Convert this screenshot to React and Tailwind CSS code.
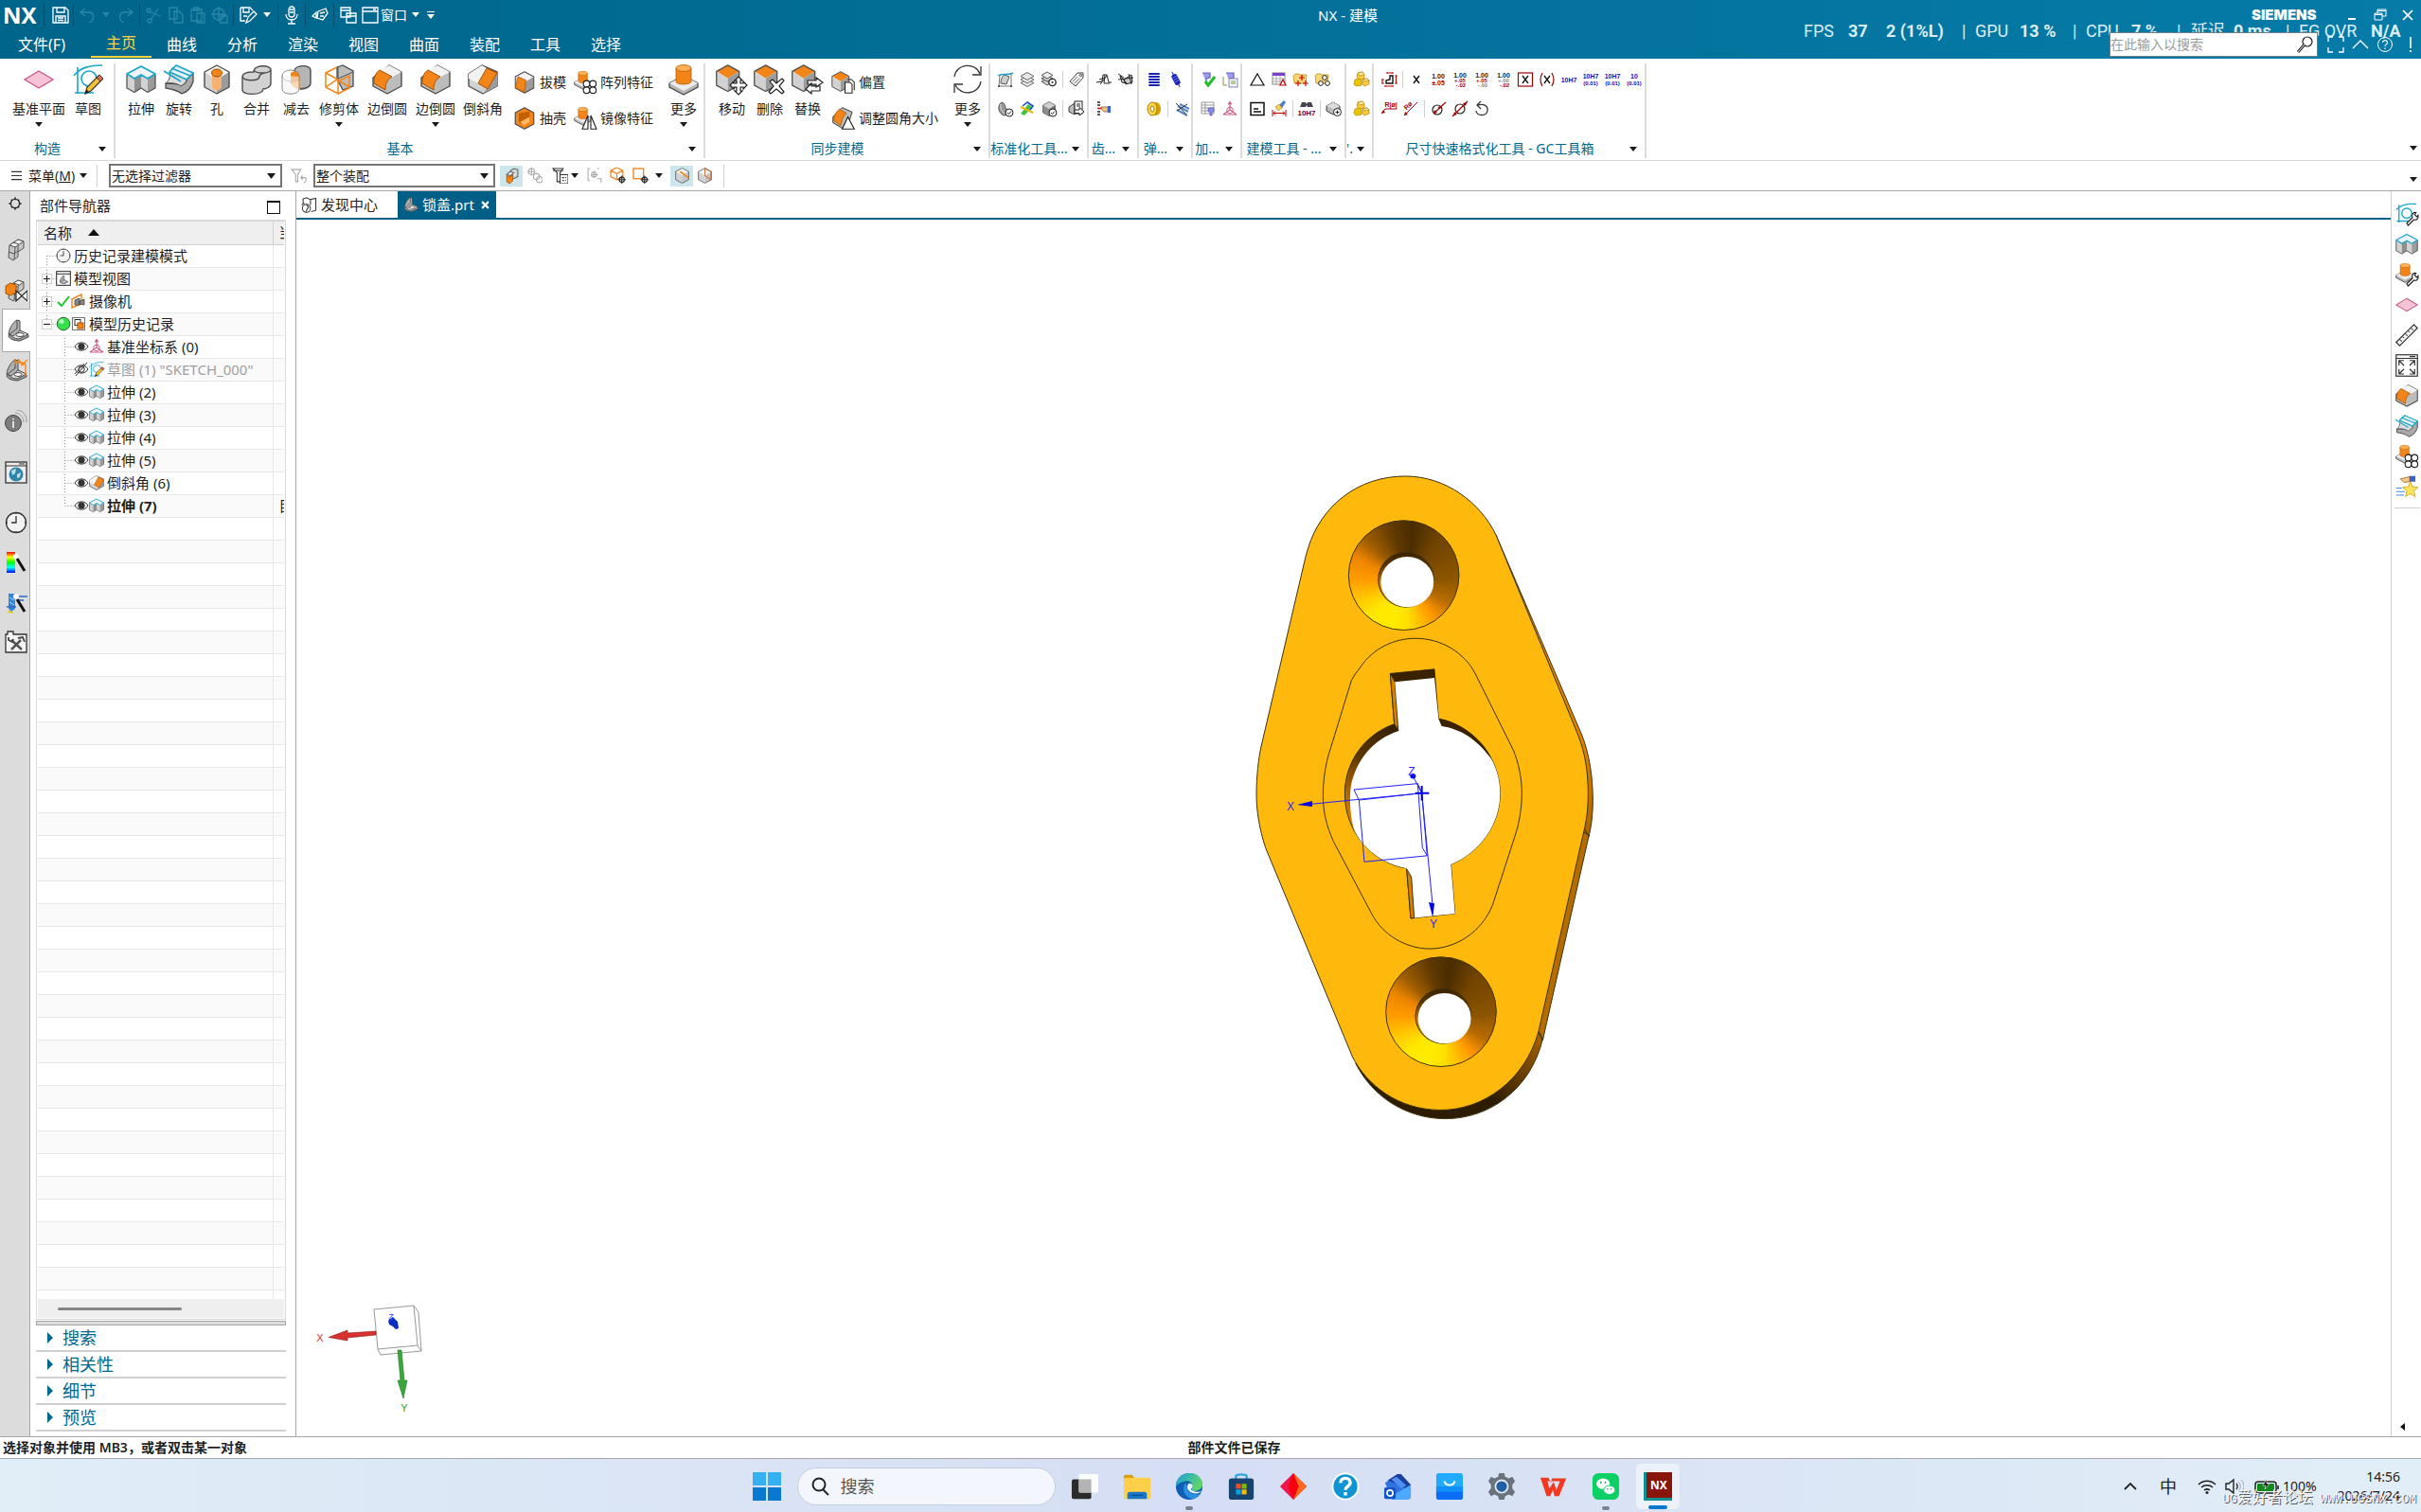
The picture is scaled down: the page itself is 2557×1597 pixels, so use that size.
import React from "react";

const S = ({ v = 24, w = 20, children, className = "" }) => (
  <svg viewBox={`0 0 ${v} ${v}`} width={w} height={w} className={`shrink-0 ${className}`} fill="none" aria-hidden="true">
    {children}
  </svg>
);

const Down = ({ className = "fill-[#1a1a1a]" }) => (
  <svg viewBox="0 0 8 5" width="8" height="5" className={`shrink-0 ${className}`} aria-hidden="true">
    <path d="M0 0H8L4 5Z" />
  </svg>
);

/* ---------- solid-body icons, 32 grid ---------- */
const OR = "#f28418";
const G1 = "#f2f2f2";
const G2 = "#d2d2d2";
const G3 = "#9c9c9c";
const ED = "#4d4d4d";

const Cube = ({ top = G1, left = G2, right = G3, x = 0, y = 0, k = 1 }) => (
  <g transform={`translate(${x} ${y}) scale(${k})`} strokeLinejoin="round">
    <path d="M16 1L29 8L16 16L3 8Z" fill={top} />
    <path d="M3 8L16 16V31L3 24Z" fill={left} />
    <path d="M29 8L16 16V31L29 24Z" fill={right} />
    <path d="M16 1L29 8V24L16 31L3 24V8Z" stroke={ED} strokeWidth="1.4" />
  </g>
);
const Boss = ({ x = 0, y = 0, k = 1 }) => (
  <g transform={`translate(${x} ${y}) scale(${k})`}>
    <path d="M16 12L31 20V24L16 32L1 24V20Z" fill="#b5b5b5" stroke={ED} strokeWidth="1.3" />
    <path d="M1 20L16 28L31 20L16 12Z" fill="#ececec" />
    <path d="M8 4V18C8 22 24 22 24 18V4Z" fill={OR} stroke="#b85c00" strokeWidth=".8" />
    <ellipse cx="16" cy="4" rx="8" ry="3.4" fill="#ffb054" stroke="#b85c00" strokeWidth=".8" />
  </g>
);

const shapes = {
  plane: <path d="M16 7L31 16L16 25L1 16Z" fill="#f6c3d6" stroke="#cc5b87" strokeWidth="1.4" />,
  sketch: (
    <g>
      <path d="M2 30H22M5 3V31M1 12C8 3 18 1 31 1" stroke="#1ba6cc" strokeWidth="1.6" />
      <circle cx="17" cy="15" r="8" stroke="#1ba6cc" strokeWidth="1.6" />
      <path d="M13 31L15 24L27 12L31 16L19 28Z" fill="#f1c232" stroke="#333" strokeWidth="1.2" />
      <path d="M25 14L28 11L32 15L29 18Z" fill="#e06a4a" stroke="#333" strokeWidth="1" />
      <path d="M13 31L14.5 26.5L17.5 29.5Z" fill="#222" />
    </g>
  ),
  extrude: (
    <g strokeLinejoin="round">
      <path d="M1 10L9 15V29L1 25Z" fill={G2} />
      <path d="M9 15L16 11V25L9 29Z" fill="#8f8f8f" />
      <path d="M16 11L23 15V29L16 25Z" fill={G2} />
      <path d="M31 10L23 15V29L31 25Z" fill={G3} />
      <path d="M16 2L31 10L23 15L16 11L9 15L1 10Z" fill="#eef4f6" stroke="#1ba6cc" strokeWidth="1.8" />
      <path d="M1 11V25L9 29.500L16 25L23 29.500L31 25V11" stroke={ED} strokeWidth="1.2" />
    </g>
  ),
  revolve: (
    <g strokeLinejoin="round">
      <path d="M31 9V18C29 25 25 29 19 31C14 27 8 26 2 25V20C9 20 14 20 18 22C21 21 24 19 24 16Z" fill="#a9a9a9" stroke={ED} strokeWidth="1.3" />
      <path d="M6 8L24 16C24 19 21 21 18 23C14 20 8 19 2 20C6 17 7 13 6 8Z" fill="#dedede" stroke={ED} />
      <path d="M13 1L31 9L24 16L6 8Z" fill="#e9f1f4" stroke="#1ba6cc" strokeWidth="1.7" />
      <path d="M0 7L18 18M8 4L28 12" stroke="#1ba6cc" strokeWidth="1.6" />
    </g>
  ),
  hole: (
    <g>
      <Cube />
      <path d="M11 8V25L16 28L21 25V8Z" fill="#f6b273" />
      <ellipse cx="16" cy="9" rx="5.5" ry="4" fill={OR} stroke="#9c5000" />
    </g>
  ),
  unite: (
    <g stroke={ED} strokeWidth="1.4">
      <path d="M13 8C13 0 31 0 31 6V20C31 24 26 26 23 26C22 33 1 33 1 27V13C1 9 8 8 13 8Z" fill={G2} />
      <path d="M13 6C15 10 29 10 31 6M1 13C3 18 18 18 19 13C19 11 22 9.500 25 9" />
    </g>
  ),
  subtract: (
    <g>
      <path d="M14 7C14 0 31 0 31 6V20C31 24 25 26 20 26Z" fill="#b5b5b5" stroke={ED} strokeWidth="1.4" />
      <path d="M14 7C19 8 20 12 20 18C16 21 14 20 10 20V9Z" fill={OR} />
      <path d="M20 17V26C18 27 12 24 10 20Z" fill="#ffb054" />
      <ellipse cx="10" cy="12" rx="9" ry="6" stroke="#8b8b8b" />
      <path d="M1 12V26C1 33 19 33 19 26V13" stroke="#8b8b8b" fill="#f3f3f3" fillOpacity=".6" />
    </g>
  ),
  trim: (
    <g>
      <path d="M14 3L20 1L31 7V23L20 27L14 15Z" fill="#bdbdbd" stroke={ED} strokeWidth="1.3" />
      <path d="M15 15L31 8M15 2V16" stroke={ED} />
      <path d="M2 9L15 16V31L2 24ZM2 9L14 3M15 31L27 25V12L15 18M2 24L14 16L27 24" stroke={OR} strokeWidth="1.5" />
    </g>
  ),
  blend: (
    <g strokeLinejoin="round">
      <path d="M18 1L31 8V23L16 31L1 23V14Z" fill="#bcbcbc" stroke={ED} strokeWidth="1.4" />
      <path d="M18 1L31 8L20 14L8 6Z" fill={G1} />
      <path d="M8 6C3 9 2 15 2 20L14 27C14 20 16 16 21 13Z" fill={OR} stroke="#a85400" />
    </g>
  ),
  chamfer: (
    <g strokeLinejoin="round">
      <path d="M15 1L31 8V23L16 31L1 23V10Z" fill={G2} stroke={ED} strokeWidth="1.4" />
      <path d="M15 1L20 4L11 20L1 15V10Z" fill={G1} />
      <path d="M31 9V23L16 31L20 26Z" fill={G3} />
      <path d="M20 4L31 9L21 26L11 20Z" fill={OR} stroke="#a85400" />
    </g>
  ),
  draft: (
    <g strokeLinejoin="round">
      <Cube />
      <path d="M7 8L18 13L16 30L3 23Z" fill={OR} stroke="#a85400" />
    </g>
  ),
  shell: (
    <g strokeLinejoin="round">
      <path d="M16 1L29 8V24L16 31L3 24V8Z" fill={OR} stroke={ED} strokeWidth="1.6" />
      <path d="M8 9L23 6V18L14 25L8 21Z" fill="#c25f00" />
      <path d="M10 21L23 14V21L15 26Z" fill="#ffb763" />
    </g>
  ),
  pattern: (
    <g>
      <Boss x={0} y={0} k={0.8} />
      <g fill="#fff" stroke="#222" strokeWidth="1.5">
        <circle cx="18" cy="18" r="4.500" /><circle cx="27" cy="18" r="4.500" />
        <circle cx="18" cy="27" r="4.500" /><circle cx="27" cy="27" r="4.500" />
      </g>
    </g>
  ),
  mirror: (
    <g>
      <Boss x={0} y={0} k={0.8} />
      <path d="M20 12V31H12ZM24 12V31H32Z" fill="#fff" stroke="#222" strokeWidth="1.5" />
    </g>
  ),
  boss: <Boss />,
  move: (
    <g>
      <Cube top={OR} x={-3} y={0} k={0.92} />
      <path d="M23 13L27 17H25V20H28V18L32 22L28 26V24H25V28H27L23 32L19 28H21V24H18V26L14 22L18 18V20H21V17H19Z" fill="#fff" stroke="#222" strokeWidth="1.2" />
    </g>
  ),
  del: (
    <g>
      <Cube top={OR} x={-3} y={0} k={0.92} />
      <path d="M16 18L19 16L23 20L29 15L31 17L26 23L31 29L29 31L23 26L17 31L15 29L20 23Z" fill="#fff" stroke="#222" strokeWidth="1.2" />
    </g>
  ),
  replace: (
    <g>
      <Cube top={OR} x={-3} y={0} k={0.92} />
      <path d="M16 17H25V14L32 19L25 24V21H16ZM29 23H20V20L14 26L20 31V28H29Z" fill="#fff" stroke="#222" strokeWidth="1.2" />
    </g>
  ),
  offset: (
    <g>
      <Cube top={OR} x={-3} y={0} k={0.92} />
      <path d="M18 16H25L28 19V31H18Z" fill="#fff" stroke="#222" strokeWidth="1.4" />
      <path d="M22 12H27L31 16V27" stroke="#222" strokeWidth="1.4" />
    </g>
  ),
  resize: (
    <g>
      <path d="M14 1L28 7L22 26L14 30L1 22V14Z" fill="#bcbcbc" stroke={ED} strokeWidth="1.4" />
      <path d="M10 3C4 8 2 14 2 19L12 26C13 18 16 12 20 9Z" fill={OR} stroke="#a85400" />
      <path d="M22 14L31 31H14Z" fill="#fff" stroke="#222" strokeWidth="1.5" />
    </g>
  ),
  refresh: (
    <g stroke="#333" strokeWidth="1.3">
      <path d="M2 13C4 -1 24 -3 29 10M30 18C28 32 9 34 3 22" />
      <path d="M30 2V11H21M2 30V21H11" />
    </g>
  ),
};
const Ico = ({ n, w = 32 }) => <S v={32} w={w} className="overflow-visible">{shapes[n]}</S>;

/* ---------- 16-grid small icons ---------- */
const grayCube = <g transform="scale(.5)"><Cube /></g>;
const T = ({ x, y, s, c, b, children }) => (
  <text x={x} y={y} fontSize={s} fill={c} fontWeight={b ? 700 : 400} textAnchor="middle" fontFamily="Liberation Sans, sans-serif">{children}</text>
);
const folder = <path d="M0 4L2 2H6L7 3H14L13 12H1Z" fill="#f7d774" stroke="#b98f1c" strokeWidth=".8" />;
const gauge = <path d="M4 1H12V6L8 7V11" fill="#9c9cec" stroke="#6262c4" strokeWidth="1.2" />;
const gold = (
  <g stroke="#b98200" strokeWidth=".7" fill="#ffcb3d">
    <path d="M4 1L9 0L11 3V7L5 8L3 5Z" /><path d="M9 8L14 7L16 9V13L11 15L9 13Z" /><path d="M1 8L6 7L8 9V14L2 15L0 13Z" fill="#e9c700" />
    <path d="M4 1L9 0L11 3L6 4ZM9 8L14 7L16 9L11 10Z" fill="#fff0b0" />
  </g>
);
const okBadge = <g><circle cx="12" cy="12" r="4" fill="#fff" stroke="#222" /><path d="M10 12L11.500 13.500L14 10.500" stroke="#222" /></g>;
const tiny = {
  xf: <g><path d="M2 3L14 2L14 15H1Z" stroke="#777" /><path d="M7 3L12 5L9 13L3 12C3 8 4 5 7 3Z" fill="#ccc" stroke="#555" /><path d="M0 4C5 0 9 5 16 1" stroke="#1ba6cc" strokeWidth="1.5" /><path d="M0 14H2V16H0ZM13 14H15V16H13Z" fill="#555" /></g>,
  layers: <g fill="#e8e8e8" stroke="#666"><path d="M8 7.500L15 11.500L8 15.500L1 11.500Z" /><path d="M8 4L15 8L8 12L1 8Z" /><path d="M8 .5L15 4.500L8 8.500L1 4.500Z" /></g>,
  layers2: <g><g fill="#ccc" stroke="#555"><path d="M6 7L12 10L6 14L0 10Z" /><path d="M6 4L12 7L6 10L0 7Z" /><path d="M6 0L12 3.500L6 7L0 3.500Z" fill="#eee" /></g><circle cx="11.500" cy="11" r="3.700" fill="#fff" stroke="#222" strokeWidth="1.300" /><circle cx="11.500" cy="11" r="1" fill="#222" /></g>,
  tag: <g><path d="M1 10L9 1L15 1L15 6L7 15Z" fill="#eee" stroke="#444" /><circle cx="12.500" cy="3.500" r="1.200" stroke="#444" /><path d="M4 10L9 5M6 12L11 7" stroke="#777" /></g>,
  gear1: <path d="M0 11L6 10L7 3H11L13 11H16M3 8L9 6M9 3L8 12L14 12M4 13L11 4" stroke="#222" />,
  gear2: <path d="M0 2L6 6M2 4L9 12L4 11ZM6 8L14 3L15 11L8 13ZM11 2L14 13M0 8L16 6" fill="#ccc" stroke="#222" />,
  spring: <path d="M3 2H13M3 5H13M3 8H13M3 11H13M3 14H13" stroke="#1a25b8" strokeWidth="2" strokeLinecap="round" />,
  spring2: <g transform="rotate(-28 8 8)"><rect x="5" y="2" width="6" height="12" rx="2" fill="#1a25b8" /><path d="M5 5H11M5 7.500H11M5 10H11" stroke="#7b84e8" strokeWidth=".7" /><path d="M8 -1V3M8 13V17" stroke="#1a25b8" /></g>,
  gaugeOk: <g><g transform="translate(-2 0)">{gauge}</g><path d="M5 10L8 14L15 5" stroke="#1fbf2a" strokeWidth="3" /></g>,
  gaugeDoc: <g>{gauge}<rect x="7" y="7" width="9" height="9" fill="#f4f4ff" stroke="#8484b4" /><path d="M9 10H14M9 12H14M1 5V14H5" stroke="#7c9a3c" /></g>,
  tri: <path d="M8 2L15 14H1Z" stroke="#111" strokeWidth="1.200" />,
  tableTri: <g><rect x="1" y="1" width="13" height="12" fill="#fff" stroke="#888" /><path d="M1 1H14V4H1Z" fill="#7a40c8" /><path d="M1 7H14M1 10H14M5 4V13M9 4V13" stroke="#999" strokeWidth=".8" /><path d="M12 8L15 14H9Z" fill="#fff" stroke="#c00000" strokeWidth="1.200" /></g>,
  folderPlus: <g>{folder}<path d="M9 3V9M6 6H12M5 9V15M2 12H8M13 9V15M10 12H16" stroke="#d40000" strokeWidth="1.200" /></g>,
  folderGear: <g>{folder}<g fill="#fff" stroke="#222"><circle cx="10" cy="6" r="2.400" /><circle cx="6" cy="12" r="2.400" /><circle cx="13" cy="12" r="2.400" /></g></g>,
  gold,
  partOk: <g><path d="M4 1C7 2 8 5 8 8L14 9V13L6 15C0 12 -1 4 4 1Z" fill="#999" stroke="#555" /><path d="M3 3C2 7 4 11 7 13" stroke="#ddd" />{okBadge}</g>,
  paint: <g><path d="M1 13L9 3L13 6L5 15Z" fill="#3fc43f" /><path d="M1 6L14 12" stroke="#e4b90c" strokeWidth="2" /><path d="M3 5L8 1L14 5L11 9" stroke="#1a4ad8" strokeWidth="1.600" /></g>,
  cubeOk: <g><g transform="scale(.5)"><Cube top="#d0d0d0" left="#8c8c8c" right="#707070" /></g>{okBadge}</g>,
  export: <g><path d="M0 6L6 2V14L0 11Z" fill="#bbb" stroke="#444" /><rect x="6" y="0" width="8" height="13" fill="#fff" stroke="#222" /><path d="M8 3H12M8 5H12" stroke="#222" /><path d="M6 9H11V6.500L16 11L11 15V12.500H6Z" fill="#fff" stroke="#222" /></g>,
  hand: <g><path d="M1 1H4M1 4H4M1 11H4M1 14H4" stroke="#222" strokeWidth="1.300" /><path d="M1 7.500H5" stroke="#d00" strokeWidth="1.500" /><path d="M5 6H12V11H8L6 9Z" fill="#f3c98c" stroke="#8b5a1c" strokeWidth=".8" /><path d="M12 5H15V12H12Z" fill="#3b62c8" /></g>,
  coil: <g><ellipse cx="10" cy="8" rx="5" ry="7" fill="#d79f00" /><ellipse cx="6" cy="8" rx="5" ry="7" fill="#ffd94a" stroke="#a67900" /><ellipse cx="6" cy="8" rx="2" ry="3" fill="#fff" stroke="#a67900" /></g>,
  cut: <g><path d="M4 5L15 11M3 9L14 15M6 3L16 8" stroke="#5b86c8" strokeWidth="2" /><path d="M2 2L13 14M14 3L3 10" stroke="#333" /></g>,
  sheet: <g><path d="M1 1H14V13H1ZM1 4H14M1 7H14M1 10H14M5 1V13" stroke="#999" /><path d="M8 7H14V11H12V15H10V11H8Z" fill="#8a8ae8" stroke="#5454c4" strokeWidth=".7" /></g>,
  csys: <g stroke="#cc5b87"><path d="M8 2V9L1 14M8 9L15 14M1 14H15" strokeWidth="1.200" /><path d="M8 0L10 3H6Z" fill="#cc5b87" strokeWidth=".6" /><circle cx="8" cy="9.500" r="3.300" /></g>,
  note: <g><rect x="1" y="1.500" width="14" height="13" stroke="#111" strokeWidth="1.500" /><path d="M4 8H9M4 11H12" stroke="#111" strokeWidth="1.300" /></g>,
  broom: <g><path d="M8 4L13 -1L15 1L11 7Z" fill="#4d78c4" /><path d="M4 6L8 3L11 7L7 10Z" fill="#f3cf5b" stroke="#a67900" strokeWidth=".6" /><path d="M1 9V16M15 9V16M2 12.500H14M4 10.500L2 12.500L4 14.500M12 10.500L14 12.500L12 14.500" stroke="#c00000" /></g>,
  bino: <g><path d="M3 1H7L8 3L9 1H13L15 6H9L8 4L7 6H1Z" fill="#445" /><T x={8} y={15} s={8} c="#700" b>10H7</T></g>,
  cubePlus: <g><path d="M7 1L14 5V10L7 14L0 10V5Z" fill="#bbb" stroke="#444" /><path d="M7 1L14 5L7 8L0 5Z" fill="#ddd" /><circle cx="11.500" cy="11.500" r="4" fill="#fff" stroke="#222" /><path d="M11.500 9.500V13.500M9.500 11.500H13.500" stroke="#222" /></g>,
  dims: <g><path d="M5 12V9L9 8V4H12V12Z" stroke="#111" strokeWidth="1.400" /><path d="M6 1H12M6 0V2M12 0V2M15.500 4V12M14 4H17M14 12H17M4 15H12M4 14V16M12 14V16M1 8V12M0 8H3M0 12H3" stroke="#c00000" /></g>,
  x: <path d="M5 4L11 12M11 4L5 12" stroke="#111" strokeWidth="1.400" />,
  tol1: <g><T x={8} y={7} s={7} c="#222" b>1.00</T><T x={8} y={14} s={7} c="#a00000" b>±.05</T></g>,
  tol2: <g><T x={8} y={6} s={7} c="#222" b>1.00</T><T x={8} y={11} s={6} c="#a00000" b>+.05</T><T x={9} y={16} s={6} c="#a00000" b>-.02</T></g>,
  tol3: <g><T x={8} y={6} s={7} c="#222" b>1.00</T><T x={8} y={11} s={6} c="#a00000" b>+.05</T><T x={9} y={16} s={6} c="#888" b>-.00</T></g>,
  tol4: <g><T x={8} y={6} s={7} c="#222" b>1.00</T><T x={8} y={11} s={6} c="#888" b>+.00</T><T x={9} y={16} s={6} c="#a00000" b>-.02</T></g>,
  boxX: <g><rect x=".5" y="1" width="15" height="14" stroke="#a00000" strokeWidth="1.200" /><path d="M5 4L11 12M11 4L5 12" stroke="#111" strokeWidth="1.300" /></g>,
  parX: <g><path d="M3 1Q-1 8 3 15M13 1Q17 8 13 15" stroke="#a00000" strokeWidth="1.200" /><path d="M5 4L11 12M11 4L5 12" stroke="#111" strokeWidth="1.300" /></g>,
  h7: <T x={8} y={11} s={7} c="#1111c0" b>10H7</T>,
  h7b: <g><T x={8} y={7} s={7} c="#1111c0" b>10H7</T><T x={8} y={14} s={6} c="#1111c0" b>(0.01)</T></g>,
  h10: <g><T x={8} y={7} s={7} c="#1111c0" b>10</T><T x={8} y={14} s={6} c="#1111c0" b>(0.01)</T></g>,
  rad1: <g><path d="M0 13L4 8H16" stroke="#a00000" /><path d="M0 13L4 12L2 9Z" fill="#a00000" /><T x={10} y={6} s={7} c="#a00000" b>R|ø|</T></g>,
  rad2: <g><path d="M1 15L15 1" stroke="#a00000" /><path d="M1 15L5 14L2 11Z" fill="#a00000" /><g transform="rotate(-45 6 7)"><T x={7} y={7} s={7} c="#a00000" b>Rø</T></g></g>,
  dia1: <g><circle cx="7" cy="9" r="5" stroke="#222" strokeWidth="1.200" /><path d="M3 13L16 1" stroke="#a00000" strokeWidth="1.200" /><path d="M3 13L7 12L4 9ZM11 5L7.500 6L10 8.500Z" fill="#a00000" /></g>,
  dia2: <g><circle cx="8" cy="8" r="5" stroke="#222" strokeWidth="1.200" /><path d="M0 16L16 0" stroke="#a00000" strokeWidth="1.200" /><path d="M1 15L5 14L2 11ZM15 1L11 2L14 5Z" fill="#a00000" /></g>,
  undo: <path d="M4 4C10 2 15 5 14 10C13 16 3 16 2 10M7 0L3 4L7 8" stroke="#333" strokeWidth="1.300" />,
};

/* ---------- ribbon parts ---------- */
const Big = ({ n, label, w, arrow }) => (
  <button className={`${w} flex h-[68px] flex-col items-center whitespace-nowrap text-sm leading-5`}>
    <Ico n={n} />
    <span className="mt-[5px]">{label}</span>
    {arrow && <Down className="mt-1 fill-[#1a1a1a]" />}
  </button>
);
const Small = ({ n, label }) => (
  <button className="flex h-[38px] items-center gap-1 whitespace-nowrap text-sm">
    <Ico n={n} w={24} />
    {label}
  </button>
);
const Group = ({ w, label, children }) => (
  <section className={`${w} flex shrink-0 flex-col border-r-2 border-[#dcdcdc]`}>
    <div className="flex h-20 pt-px">{children}</div>
    <div className="flex h-5 items-center pr-2">
      <h2 className="min-w-0 flex-1 whitespace-nowrap pr-1 text-center text-sm leading-5 text-[#00688f]">{label}</h2>
      <button aria-label="选项"><Down /></button>
    </div>
  </section>
);
const Rows = ({ rows }) => (
  <div className="pl-1">
    {rows.map((r, i) => (
      <div key={i} className="flex h-[31px] items-center">
        {r.map((n, j) =>
          n === "|" ? (
            <span key={j} className="flex w-[6px] justify-center"><span className="h-[18px] w-px bg-[#cfcfcf]" /></span>
          ) : (
            <button key={j} aria-label={n} className="flex w-[23px] justify-center"><S v={16} w={16} className="overflow-visible">{tiny[n]}</S></button>
          )
        )}
      </div>
    ))}
  </div>
);

/* ---------- header ---------- */
const QSep = ({ className = "" }) => <span className={`h-6 w-px bg-[#004f6e] ${className}`} />;
const Q = ({ dim, children, label, w = 20 }) => (
  <button aria-label={label} className={`flex w-[23px] justify-center ${dim ? "text-[#2a87aa]" : "text-white"}`}>
    <S v={20} w={w}><g stroke="currentColor" strokeWidth="1.300">{children}</g></S>
  </button>
);
const tabs = ["曲线", "分析", "渲染", "视图", "曲面", "装配", "工具", "选择"];

function Header() {
  return (
    <header className="relative h-[62px] shrink-0 bg-linear-to-r from-[#00658a] to-[#067ba8] text-white">
      <div className="absolute right-[19px] top-[22px] flex h-[22px] items-center whitespace-nowrap font-['Roboto','Noto_Sans_CJK_SC',sans-serif] text-lg leading-[22px] text-[#dceef5]">
        <span className="w-[47px]">FPS</span><b className="w-10">37</b><b className="w-20">2 (1%L)</b>
        <span className="w-[14px]">|</span><span className="w-[47px]">GPU</span><b className="w-14">13 %</b>
        <span className="w-[14px]">|</span><span className="w-12">CPU</span><b className="w-12">7 %</b>
        <span className="w-[15px]">|</span><span className="w-[45px]">延迟</span><b className="w-[55px]">0 ms</b>
        <span className="w-[14px]">|</span><span className="w-[76px]">FG OVR</span><b className="w-[34px]">N/A</b>
      </div>
      <div className="relative grid h-[31px] grid-cols-[1fr_auto_1fr] items-center">
        <div className="flex items-center">
          <b className="w-[46px] pl-[3px] font-['Open_Sans',sans-serif] text-2xl leading-7">NX</b>
          <QSep />
          <span className="w-[5px]" />
          <Q label="保存"><path d="M2 2H15L18 5V18H2ZM6 2V7H14V2M5 18V11H15V18M7 13H13M7 15.500H13" /></Q>
          <QSep className="mx-[2px]" />
          <Q dim label="撤消"><path d="M8 3L3 7L8 11M3 7H12C18 7 18 16 12 18" /></Q>
          <Down className="mx-[5px] fill-[#2a87aa]" />
          <Q dim label="重做"><path d="M12 3L17 7L12 11M17 7H9C2 7 2 16 8 18" /></Q>
          <QSep className="mx-[3px]" />
          <Q dim label="剪切"><path d="M3 6L17 11M14 3L6 15" /><circle cx="4" cy="5" r="2" /><circle cx="5" cy="16" r="2" /></Q>
          <Q dim label="复制"><path d="M3 2H11V14H3ZM8 6H13L17 10V18H8Z" /></Q>
          <Q dim label="粘贴"><path d="M3 4H14V16H3ZM6 2H11V5H6ZM9 8H17V18H9Z" /></Q>
          <Q dim label="定位"><circle cx="9" cy="9" r="6" /><path d="M9 1V17M1 9H17M11 11H18V18H11Z" /></Q>
          <QSep className="mx-[3px]" />
          <Q label="编辑"><path d="M2 2H12L15 5M2 2V16H7M5 2V7H11V3M5 11H9M8 18L10 12L16 6L19 9L12 16Z" /></Q>
          <Down className="mx-[5px] fill-white" />
          <QSep className="mx-[2px]" />
          <Q label="语音"><rect x="7" y="1" width="6" height="11" rx="3" /><path d="M4 9C4 17 16 17 16 9M10 15V19M6 19H14M8 4H12M8 7H12" /></Q>
          <QSep className="mx-[3px]" />
          <Q label="触控"><path d="M2 11L6 7V13ZM8 6L16 3L18 8L13 15L7 13ZM10 8L15 7M10 11H14" /></Q>
          <QSep className="mx-[3px]" />
          <Q label="切换窗口"><path d="M2 2H12V12H2ZM2 5H12M8 8H18V18H8ZM8 11H18" /></Q>
          <Q label="窗口"><path d="M2 2H18V18H2ZM2 6H18M13 4H16" /></Q>
          <button className="flex items-center gap-[5px] whitespace-nowrap text-sm leading-5">窗口<Down className="fill-white" /></button>
          <button aria-label="自定义" className="ml-2 flex flex-col items-center gap-[2px]"><span className="h-px w-2 bg-white" /><Down className="fill-white" /></button>
        </div>
        <h1 className="pl-[290px] text-[15px] leading-5">NX - 建模</h1>
        <div className="flex items-center justify-end">
          <b className="w-[102px] font-['Inter','Liberation_Sans',sans-serif] text-[15px] font-black leading-5">SIEMENS</b>
          <button aria-label="最小化" className="mr-[19px] mt-2 h-[2px] w-2 bg-white" />
          <button aria-label="还原" className="mr-4"><S v={14} w={14}><path d="M4 5V1H13V8H9M1 5H9V12H1ZM4 2.500H13M1 6.500H9" stroke="#fff" /></S></button>
          <button aria-label="关闭" className="mr-2"><S v={12} w={12}><path d="M1 1L11 11M11 1L1 11" stroke="#fff" strokeWidth="1.600" /></S></button>
        </div>
      </div>
      <nav className="relative flex h-[31px] items-stretch text-base">
        <button className="w-24 pr-2 leading-7">文件(F)</button>
        <button className="mb-px w-16 border-b-2 border-[#ffd23c] leading-7 text-[#ffd23c]">主页</button>
        {tabs.map((t) => <button key={t} className="w-16 leading-7">{t}</button>)}
        <div className="ml-auto flex items-center pr-2">
          <label className="mr-[10px] flex h-[26px] w-[220px] items-center border border-[#6d7f88] bg-white pr-1">
            <input aria-label="搜索命令" placeholder="在此输入以搜索" className="min-w-0 flex-1 text-sm outline-none placeholder:text-[#9a9a9a]" />
            <S v={18} w={18}><circle cx="12" cy="6" r="5" stroke="#222" strokeWidth="1.200" /><path d="M9 9L2 17" stroke="#222" strokeWidth="3" /><path d="M9 9L2 17" stroke="#fff" /></S>
          </label>
          <button aria-label="全屏" className="mr-2"><S v={18} w={18}><path d="M1 6V1H6M12 1H17V6M17 12V17H12M6 17H1V12" stroke="#fff" strokeWidth="1.300" /></S></button>
          <button aria-label="收起" className="mr-2"><S v={18} w={18}><path d="M1 13L9 5L17 13" stroke="#fff" strokeWidth="1.300" /></S></button>
          <button aria-label="帮助" className="mr-[15px]"><S v={18} w={18}><circle cx="9" cy="9" r="7.500" stroke="#fff" /><path d="M6.500 7C6.500 3.500 12 4 11.500 7.500C11 9 9 9 9 11M9 12.500V14" stroke="#fff" strokeWidth="1.200" /></S></button>
          <button aria-label="提示"><S v={18} w={18} className="-mx-[6px]"><path d="M9 1V13M9 15V17" stroke="#fff" strokeWidth="1.600" /></S></button>
        </div>
      </nav>
    </header>
  );
}

function Ribbon() {
  return (
    <div className="flex h-[108px] shrink-0 border-b border-[#d8d8d8] bg-white pt-[5px] pb-[2px]">
      <Group w="w-[122px]" label="构造">
        <span className="w-[10px]" />
        <Big n="plane" label="基准平面" w="w-[62px]" arrow />
        <Big n="sketch" label="草图" w="w-[42px]" />
      </Group>
      <Group w="w-[623px]" label="基本">
        <span className="w-[7px]" />
        <Big n="extrude" label="拉伸" w="w-10" />
        <Big n="revolve" label="旋转" w="w-10" />
        <Big n="hole" label="孔" w="w-10" />
        <Big n="unite" label="合并" w="w-11" />
        <Big n="subtract" label="减去" w="w-10" />
        <Big n="trim" label="修剪体" w="w-[50px]" arrow />
        <Big n="blend" label="边倒圆" w="w-[52px]" />
        <Big n="blend" label="边倒圆" w="w-[50px]" arrow />
        <Big n="chamfer" label="倒斜角" w="w-[50px]" />
        <div className="ml-[7px] w-16"><Small n="draft" label="拔模" /><Small n="shell" label="抽壳" /></div>
        <div className="w-24"><Small n="pattern" label="阵列特征" /><Small n="mirror" label="镜像特征" /></div>
        <Big n="boss" label="更多" w="w-10" arrow />
      </Group>
      <Group w="w-[301px]" label="同步建模">
        <span className="w-2" />
        <Big n="move" label="移动" w="w-10" />
        <Big n="del" label="删除" w="w-10" />
        <Big n="replace" label="替换" w="w-10" />
        <div className="ml-[6px] w-[123px]"><Small n="offset" label="偏置" /><Small n="resize" label="调整圆角大小" /></div>
        <Big n="refresh" label="更多" w="w-10" arrow />
      </Group>
      <Group w="w-[104px]" label="标准化工具...">
        <Rows rows={[["xf", "layers", "layers2", "|", "tag"], ["partOk", "paint", "cubeOk", "|", "export"]]} />
      </Group>
      <Group w="w-[53px]" label="齿..."><Rows rows={[["gear1", "gear2"], ["hand"]]} /></Group>
      <Group w="w-[57px]" label="弹..."><Rows rows={[["spring", "spring2"], ["coil", "|", "cut"]]} /></Group>
      <Group w="w-[52px]" label="加..."><Rows rows={[["gaugeOk", "gaugeDoc"], ["sheet", "csys"]]} /></Group>
      <Group w="w-[110px]" label="建模工具 - ...">
        <Rows rows={[["tri", "tableTri", "folderPlus", "folderGear"], ["note", "broom", "|", "bino", "|", "cubePlus"]]} />
      </Group>
      <Group w="w-[29px]" label="'."><Rows rows={[["gold"], ["gold"]]} /></Group>
      <Group w="w-[288px]" label="尺寸快速格式化工具 - GC工具箱">
        <Rows rows={[["dims", "|", "x", "tol1", "tol2", "tol3", "tol4", "boxX", "parX", "h7", "h7b", "h7b", "h10"], ["rad1", "rad2", "|", "dia1", "dia2", "undo"]]} />
      </Group>
      <button aria-label="功能区选项" className="mb-2 ml-auto mr-1 self-end"><Down /></button>
    </div>
  );
}

const Sel = ({ w, label, value }) => (
  <span className={`${w} relative flex h-[25px] shrink-0 items-center border-2 border-[#767676] bg-white`}>
    <select aria-label={label} className="h-full w-full appearance-none pl-px text-sm leading-5 outline-none"><option>{value}</option></select>
    <svg viewBox="0 0 9 6" width="9" height="6" className="pointer-events-none absolute right-[5px] fill-[#1a1a1a]"><path d="M0 0H9L4.500 6Z" /></svg>
  </span>
);
const SB = ({ on, children, label }) => (
  <button aria-label={label} className={`flex h-[22px] w-6 items-center justify-center ${on ? "bg-[#cde6eb]" : ""}`}><S v={16} w={17}>{children}</S></button>
);

function SelectionBar() {
  return (
    <div className="flex h-[32px] shrink-0 items-center border-b border-[#a8a8a8] bg-white text-sm">
      <button className="flex w-[102px] items-center pl-3">
        <S v={12} w={11}><path d="M0 1.500H12M0 6H12M0 10.500H12" stroke="#333" strokeWidth="1.200" /></S>
        <span className="ml-[7px] mr-[5px]">菜单(<u>M</u>)</span><Down />
      </button>
      <span className="mr-3 h-6 w-px bg-[#d0d0d0]" />
      <Sel w="w-[183px]" label="选择过滤器" value="无选择过滤器" />
      <span className="w-[5px]" />
      <SB label="重置过滤器"><path d="M1 2H10L7 7V14H5V7ZM10 10H14C16 10 16 14 13 15M12 8L10 10L12 12" stroke="#aaa" /></SB>
      <span className="w-1" />
      <Sel w="w-[192px]" label="选择范围" value="整个装配" />
      <span className="w-[5px]" />
      <SB on label="类型过滤器"><path d="M7 3L10 1L14 2V9L10 11L7 9Z" fill="#d8d8d8" stroke="#666" /><path d="M3 7L6 4L10 5L7 8Z" fill="#eee" stroke="#666" /><path d="M3 8L7 9L9 7V13L6 16L3 14Z" fill={OR} stroke="#a85400" strokeWidth=".8" /></SB>
      <SB label="特征组"><g stroke="#aaa"><circle cx="5" cy="4" r="3" /><circle cx="10" cy="9" r="3" /><circle cx="13" cy="12" r="3" /><path d="M5 0V8M1 4H9" /></g></SB>
      <span className="w-[3px]" />
      <SB label="过滤"><path d="M1 1H11L8 5V14H5V5ZM1 3H11" stroke="#333" /><rect x="8" y="7" width="8" height="9" fill="#fff" stroke="#333" /><path d="M10 10H12M10 13H12M13 10H14M13 13H14" stroke="#333" /></SB>
      <Down />
      <span className="w-[5px]" />
      <SB label="捕捉"><path d="M3 1H1V13H3M10 1H12M7 3V10M4 7H11" stroke="#aaa" /><circle cx="7" cy="7" r="2.500" stroke="#aaa" /><path d="M10 11H14V15" stroke="#aaa" /></SB>
      <SB label="体"><path d="M7 0L13 3V9L7 12L1 9V3ZM1 3L7 6L13 3M7 6V12" stroke={OR} strokeWidth="1.200" /><circle cx="12" cy="12" r="2.500" stroke="#222" /><path d="M12 8V16M8 12H16" stroke="#222" /></SB>
      <SB label="框选"><rect x="1" y="1" width="10" height="10" stroke={OR} strokeWidth="1.300" /><circle cx="12" cy="12" r="2.500" stroke="#222" /><path d="M12 8V16M8 12H16" stroke="#222" /></SB>
      <span className="w-1" />
      <Down />
      <span className="w-2" />
      <SB on label="着色"><g transform="scale(.5)"><Cube right="#c6c6c6" /></g><path d="M6 4L14 10" stroke={OR} strokeWidth="1.600" /></SB>
      <SB label="边"><g transform="scale(.5)"><Cube right="#c6c6c6" /></g><path d="M8 1L14 4V12L8 8Z" stroke="#c87840" /></SB>
      <span className="ml-2 h-6 w-px bg-[#d0d0d0]" />
      <button aria-label="选择条选项" className="ml-auto mr-1 mt-2"><Down /></button>
    </div>
  );
}

/* ---------- resource bar ---------- */
const part = (
  <g stroke="#4d4d4d" strokeWidth="1" strokeLinejoin="round">
    <path d="M3 15L14 12L23 17V19L14 23C8 23 3 21 2 18Z" fill="#9a9a9a" />
    <path d="M3 15L14 12L23 16L13 21C8 21 4 18 3 15Z" fill="#dcdcdc" />
    <path d="M2 16C3 9 7 3 11 1L14 2V12L7 18Z" fill="#b0b0b0" />
    <path d="M11 1V10L3 16" />
    <ellipse cx="14" cy="16.500" rx="4" ry="2" fill="#fff" />
  </g>
);
const Clock = ({ w = 24 }) => (
  <S v={24} w={w}><circle cx="12" cy="12" r="10.500" stroke="#333" strokeWidth="1.300" fill="#f2f2f2" /><path d="M12 5V12H7M12 1V3M12 21V23M1 12H3M21 12H23" stroke="#333" strokeWidth="1.300" /></S>
);
const asm = (
  <g stroke="#555" strokeLinejoin="round">
    <path d="M5 7L14 1L20 3V10L14 14V19L9 23L4 20Z" fill="#c6c6c6" />
    <path d="M5 7L14 1L20 3L11 9Z" fill="#efefef" />
    <path d="M11 9L10 22M4 14L10 16L14 13M14 7V14M9 4L15 6" />
  </g>
);
const wand = <path d="M13 8L21 21" stroke="#111" strokeWidth="3" />;
const side = [
  ["资源条选项", "h-[26px]", <g stroke="#222" strokeWidth="1.600"><circle cx="12" cy="12" r="5.500" /><path d="M12 4V7M12 17V20M4 12H7M17 12H20M7 7L8.500 8.500M17 7L15.500 8.500M7 17L8.500 15.500M17 17L15.500 15.500" /></g>],
  ["装配导航器", "mt-6 h-6", asm],
  ["约束导航器", "mt-[19px] h-6", <g>{asm}<path d="M1 7L6 4L12 6V14L6 17L1 15Z" fill={OR} stroke="#a85400" /><path d="M12 12V23L24 12V23Z" fill="#fff" stroke="#222" strokeWidth="1.200" /></g>],
  ["部件导航器", "on", part],
  ["MBD 导航器", "mt-[7px] h-6", <g>{part}<path d="M11 0V6M11 3L22 5M22 5V18M14 0L20 7M17 7L24 1" stroke={OR} strokeWidth="1.300" /></g>],
  ["信息", "mt-[30px] h-6", <g><circle cx="9" cy="14" r="8.500" fill="#7d7d7d" stroke="#444" /><path d="M9 12V19M9 9V10.500" stroke="#fff" strokeWidth="1.500" /><path d="M11 3C16 3 20 8 20 13M12 0C19 0 24 6 23 13" stroke="#999" /></g>],
  ["Web 浏览器", "mt-[30px] h-6", <g><rect x="1" y="1" width="22" height="22" fill="#eee" stroke="#333" strokeWidth="1.300" /><path d="M1 5H23M15 3H21" stroke="#333" /><circle cx="12" cy="14" r="7.500" fill="#2e86a8" /><path d="M7 10L12 8L11 13L8 15ZM13 14L17 12L16 17L13 18Z" fill="#b9dfec" /></g>],
  ["历史记录", "mt-[29px] h-6", null],
  ["可视化", "mt-[18px] h-6", <g><defs><linearGradient id="rb" x2="0" y2="1"><stop stopColor="#f00" /><stop offset=".25" stopColor="#ff0" /><stop offset=".5" stopColor="#0f0" /><stop offset=".75" stopColor="#0ff" /><stop offset="1" stopColor="#00f" /></linearGradient></defs><rect x="2" y="1" width="9" height="22" fill="url(#rb)" /><circle cx="12" cy="6" r="3" fill="#fff" />{wand}</g>],
  ["加工", "mt-[19px] h-6", <g><path d="M4 2H11V18L7 21L4 18Z" fill="#2f86dc" /><path d="M11 5H24M14 9H20M2 16H12" stroke="#3566c8" strokeWidth="1.500" /><path d="M5 6L10 9M5 11L10 14" stroke="#9fd0ff" /><circle cx="12" cy="5" r="3" fill="#fff" />{wand}<path d="M3 21L9 22" stroke="#ecc72a" strokeWidth="2" /></g>],
  ["工具箱", "mt-[17px] h-6", <g><path d="M1 4H3V1H9V4H23V23H1Z" fill="#f5f5f5" stroke="#333" strokeWidth="1.300" /><path d="M7 10L18 20M17 10L7 20" stroke="#555" strokeWidth="2.500" /><path d="M4 7V10L8 12L9 9M14 8L19 7L21 12" stroke="#444" strokeWidth="1.800" /></g>],
];
function ResourceBar() {
  return (
    <div className="flex w-[32px] shrink-0 flex-col border-r border-[#a8a8a8] bg-[#dcdcdc]">
      {side.map(([label, h, g], i) => (
        <button key={label} aria-label={label} className={`flex shrink-0 items-center justify-center ${h === "on" ? "-mr-px ml-[2px] mt-[7px] h-[46px] border border-r-0 border-[#a8a8a8] bg-white" : h} ${i ? "pl-[3px]" : ""}`}>
          {g ? <S v={24} w={i ? 24 : 20}>{g}</S> : <Clock />}
        </button>
      ))}
    </div>
  );
}

/* ---------- part navigator ---------- */
const Guide = ({ box, up = true, down = true }) => (
  <svg width="19" height="24" viewBox="0 0 19 24" className="shrink-0" fill="none" aria-hidden="true">
    <path d={`M9.500 ${up ? 0 : 12}V${down ? 24 : 12}M9.500 12.500H19`} stroke="#8c8c8c" strokeDasharray="1 2" />
    {box && <g><rect x="4.500" y="7.500" width="10" height="10" fill="#fff" stroke="#d0d0d0" /><path d={box === "+" ? "M6 12.500H13M9.500 9V16" : "M6 12.500H13"} stroke="#222" strokeWidth="1.200" /></g>}
  </svg>
);
const Eye = ({ off }) => (
  <S v={16} w={16}><path d="M1 8C4 2.500 12 2.500 15 8C12 13.500 4 13.500 1 8Z" stroke="#333" /><circle cx="8" cy="8" r="3.200" fill={off ? "none" : "#333"} stroke="#333" />{off && <path d="M2 15L14 1M1 13L11 2" stroke="#333" />}</S>
);
const rows = [
  { t: "历史记录建模模式", g: <Guide up={false} />, i: [<Clock w={16} />] },
  { t: "模型视图", g: <Guide box="+" />, i: [<S v={24} w={16}><rect x="1" y="1" width="22" height="22" fill="#fff" stroke="#333" strokeWidth="1.600" /><path d="M1 5H23" stroke="#333" strokeWidth="1.500" /><g transform="translate(5 7) scale(.6)">{part}</g></S>] },
  { t: "摄像机", g: <Guide box="+" />, i: [<S v={16} w={16}><path d="M2 9L6 13L14 3" stroke="#1fc42c" strokeWidth="2" /></S>, <S v={16} w={16}><path d="M1 6L11 1V11L1 15Z" stroke={OR} strokeWidth="1.400" /><path d="M4 7L9 5V12H4ZM9 8L14 6V12L9 11Z" fill="#888" stroke="#444" strokeWidth=".8" /></S>] },
  { t: "模型历史记录", g: <Guide box="-" down={false} />, i: [<S v={16} w={16}><circle cx="8" cy="8" r="6.800" fill="#35e04a" stroke="#2a6c34" /><circle cx="6" cy="5.500" r="2.500" fill="#b4ffbd" /></S>, <S v={16} w={16}><rect x="1.500" y="1.500" width="13" height="13" stroke="#777" /><rect x="4" y="3.500" width="6" height="6" fill="#fff" stroke="#333" /><rect x="7" y="7" width="6" height="6" fill={OR} stroke="#a85400" /></S>] },
  { t: "基准坐标系 (0)", c: 1, i: [<Eye />, <S v={16} w={16}>{tiny.csys}</S>] },
  { t: '草图 (1) "SKETCH_000"', c: 1, dim: 1, i: [<Eye off />, <Ico n="sketch" w={16} />] },
  { t: "拉伸 (2)", c: 1, i: [<Eye />, <Ico n="extrude" w={16} />] },
  { t: "拉伸 (3)", c: 1, i: [<Eye />, <Ico n="extrude" w={16} />] },
  { t: "拉伸 (4)", c: 1, i: [<Eye />, <Ico n="extrude" w={16} />] },
  { t: "拉伸 (5)", c: 1, i: [<Eye />, <Ico n="extrude" w={16} />] },
  { t: "倒斜角 (6)", c: 1, i: [<Eye />, <Ico n="chamfer" w={16} />] },
  { t: "拉伸 (7)", c: 1, bold: 1, last: 1, i: [<Eye />, <Ico n="extrude" w={16} />] },
];
const filler = Array.from({ length: 48 });

function Navigator() {
  return (
    <aside className="flex w-[280px] shrink-0 flex-col bg-white text-[15px]">
      <div className="flex h-[30px] items-center justify-between pl-[10px] pr-4">
        <h2>部件导航器</h2>
        <button aria-label="最大化" className="mt-1 h-[14px] w-[14px] border border-t-2 border-[#111]" />
      </div>
      <div className="ml-[6px] mr-[10px] flex min-h-0 flex-1 flex-col border border-t-2 border-[#d8d8d8] px-px">
        <div className="min-h-0 flex-1 overflow-hidden">
          <table className="w-full table-fixed border-collapse">
            <colgroup><col /><col className="w-[12px]" /></colgroup>
            <thead>
              <tr className="h-6 bg-[#efefef]">
                <th className="border-b border-r border-[#d0d0d0] p-0 pl-[6px] text-left font-normal">
                  <span className="flex h-[23px] items-center gap-[17px]">名称<svg width="12" height="7" viewBox="0 0 12 7"><path d="M0 7L6 0L12 7Z" fill="#111" /></svg></span>
                </th>
                <th className="overflow-hidden border-b border-[#d0d0d0] p-0 pl-[6px] font-normal"><span className="block h-[23px] w-[5px] overflow-hidden leading-[23px]">当</span></th>
              </tr>
            </thead>
            <tbody>
              {rows.map((r, i) => (
                <tr key={i} className={`h-6 ${i % 2 ? "bg-[#fafafa]" : "bg-white"}`}>
                  <td className="border-b border-r border-[#e8e8e8] p-0">
                    <span className={`flex h-[23px] items-center overflow-hidden whitespace-nowrap leading-[23px] ${r.dim ? "text-[#a0a0a0]" : ""} ${r.bold ? "font-bold" : ""}`}>
                      {r.c ? <span className="w-[19px] shrink-0" /> : null}
                      {r.g || <Guide down={!r.last} />}
                      {r.i.map((x, j) => <React.Fragment key={j}>{x}</React.Fragment>)}
                      <span className="pl-[3px]">{r.t}</span>
                    </span>
                  </td>
                  <td className="border-b border-[#e8e8e8] p-0 pl-[6px]">{r.last ? <span className="block h-[23px] w-[5px] overflow-hidden leading-[23px]">目</span> : null}</td>
                </tr>
              ))}
              {filler.map((_, i) => (
                <tr key={i} className={`h-6 ${i % 2 ? "bg-[#fafafa]" : "bg-white"}`}>
                  <td className="border-b border-r border-[#e8e8e8] p-0" /><td className="border-b border-[#e8e8e8] p-0" />
                </tr>
              ))}
            </tbody>
          </table>
        </div>
        <div className="mb-px flex h-5 shrink-0 items-center bg-[#efefef] pl-[21px]"><span className="h-[3px] w-[131px] rounded bg-[#868686]" /></div>
      </div>
      <div className="ml-[6px] mr-[10px] mt-px h-[5px] shrink-0 border border-[#a8a8a8] bg-[#dcdcdc]" />
      <div className="mb-[5px] ml-[6px] mr-[10px]">
        {["搜索", "相关性", "细节", "预览"].map((t) => (
          <button key={t} className="flex h-7 w-full items-center gap-[10px] border-b-2 border-[#d0d0d0] pl-3 text-lg leading-6 text-[#00688f]">
            <svg width="6" height="12" viewBox="0 0 6 12"><path d="M0 0L6 6L0 12Z" fill="#00688f" /></svg>{t}
          </button>
        ))}
      </div>
    </aside>
  );
}

/* ---------- 3D part ---------- */
const stops = [[0, 0x8c, 0x55, 0], [30, 0xb8, 0x6c, 0], [52, 0xff, 0x96, 0], [85, 0xff, 0xe0, 0], [105, 0xff, 0xec, 0], [128, 0xff, 0xe8, 0], [150, 0xff, 0xc8, 0], [175, 0xff, 0x9c, 0], [200, 0xee, 0x86, 0], [222, 0xa0, 0x5e, 0], [255, 0x60, 0x39, 0], [278, 0x4a, 0x2c, 0], [310, 0x70, 0x43, 0], [360, 0x8c, 0x55, 0]];
function shade(a) {
  for (let i = 1; i < stops.length; i++) {
    if (a <= stops[i][0]) {
      const p = stops[i - 1], q = stops[i], f = (a - p[0]) / (q[0] - p[0]);
      return `rgb(${[1, 2, 3].map((k) => Math.round(p[k] + (q[k] - p[k]) * f)).join(",")})`;
    }
  }
}
const Sink = ({ x, y }) => {
  const n = 120;
  const pt = (a, cx, cy, rx, ry) => `${(cx + rx * Math.cos((a * Math.PI) / 180)).toFixed(1)} ${(cy + ry * Math.sin((a * Math.PI) / 180)).toFixed(1)}`;
  return (
    <g transform={`translate(${x} ${y})`}>
      {Array.from({ length: n }, (_, i) => {
        const a = (i * 360) / n, b = ((i + 1.3) * 360) / n;
        return <path key={i} fill={shade(a)} d={`M${pt(a, 0, 0, 175, 126)}L${pt(b, 0, 0, 175, 126)}L${pt(b, 7, 10, 86, 61)}L${pt(a, 7, 10, 86, 61)}Z`} />;
      })}
      <ellipse rx="175" ry="126" className="stroke-[#3c3410]" vectorEffect="non-scaling-stroke" />
      <ellipse cx="7" cy="10" rx="88" ry="63" fill="url(#bore)" className="stroke-[#3c3410]" vectorEffect="non-scaling-stroke" />
      <ellipse cx="11" cy="15" rx="84" ry="58" fill="#fff" />
    </g>
  );
};
function Model() {
  const e = { stroke: "#3c3410", vectorEffect: "non-scaling-stroke" };
  const b = { stroke: "#2222ff", vectorEffect: "non-scaling-stroke" };
  return (
    <svg viewBox="0 0 420 720" width="420" height="720" fill="none" className="absolute left-[987px] top-[248px]" role="img" aria-label="锁盖">
      <defs>
        <linearGradient id="bore" x2="0" y2="1"><stop stopColor="#3a2200" /><stop offset=".25" stopColor="#5a3600" /><stop offset=".6" stopColor="#d88000" /></linearGradient>
        <linearGradient id="wall" gradientUnits="userSpaceOnUse" x1="480" y1="620" x2="370" y2="840"><stop stopColor="#3a2200" /><stop offset=".4" stopColor="#5a3600" /><stop offset="1" stopColor="#e08400" /></linearGradient>
        <linearGradient id="rim" gradientUnits="userSpaceOnUse" x1="1120" y1="660" x2="1140" y2="880"><stop stopColor="#e08400" /><stop offset="1" stopColor="#a86200" /></linearGradient>
        <linearGradient id="foot" gradientUnits="userSpaceOnUse" x1="985" y1="1350" x2="850" y2="1500"><stop stopColor="#a05e00" /><stop offset="1" stopColor="#2e1c00" /></linearGradient>
      </defs>
      <g transform="scale(.33333 .45918)" strokeLinejoin="round">
        <path d="M840 185L1112 645C1136 690 1147 740 1147 800C1146 840 1140 860 1134 880L1080 900L1000 700Z" fill="url(#rim)" {...e} />
        <path d="M1135 875L988 1348L940 1340L1090 860Z" fill="#b46c00" {...e} />
        <path d="M988 1345C950 1460 820 1528 680 1528C560 1528 450 1480 395 1400L600 1400L970 1320Z" fill="url(#foot)" {...e} />
        <path d="M245 215C285 120 400 50 553 50C680 50 790 110 840 185L1100 645C1122 685 1132 730 1132 780C1132 815 1127 840 1120 862L974 1330C930 1440 800 1508 665 1508C530 1508 430 1450 385 1385L110 905C90 860 81 820 81 780C81 740 88 700 95 675L237 235Z" fill="#ffb80c" {...e} />
        <path d="M410 490C450 445 520 423 585 423C665 423 740 455 775 505L895 680C912 710 922 745 922 780C922 815 912 850 905 867L830 1035C795 1100 710 1137 630 1137C555 1137 480 1105 445 1055L325 890C303 855 292 820 292 785C292 750 300 715 310 690L382 520Q392 505 410 490Z" {...e} />
        <path d="M505 504L645 494L658 608C720 615 790 650 822 695C845 725 853 755 853 780C853 850 790 915 697 943L710 1056L570 1067L557 952C450 940 361 870 361 780C361 710 420 645 518 620Z" fill="url(#wall)" {...e} />
        <path d="M505 504L645 494V515L520 523ZM658 608C720 615 790 650 825 698C790 665 740 632 668 625Z" fill="#3a2200" />
        <path d="M505 504L520 523L530 634L518 620Z" fill="#d88000" {...e} />
        <path d="M520 523L645 514L658 608L668 625C740 632 790 665 825 700C845 725 853 755 853 780C853 850 790 915 697 943L710 1056L581 1066L572 972L557 952C480 942 415 905 390 862C376 825 376 790 380 765C395 705 450 655 532 636Z" fill="#fff" />
        <path d="M557 954L572 972L581 1066L570 1067Z" fill="#d88000" {...e} />
        <Sink x={548} y={278} />
        <Sink x={666} y={1282} />
        <path d="M1120 860L1134 878M974 1328L988 1348" {...e} />
        <path d="M592 757L390 771L406 795L423 937L622 923L607 905L592 757L605 779L406 795M605 779L622 923M258 804L605 779L639 1035M577 740L605 779" {...b} />
        <path d="M210 806L258 797V810ZM627 1030L645 1033L640 1065Z" fill="#0000e8" />
        <ellipse cx="577" cy="740" rx="9" ry="6" fill="#0000e8" />
        <path d="M605 762V796M584 779H628" stroke="#0000e8" strokeWidth="2" vectorEffect="non-scaling-stroke" />
      </g>
      <g fontFamily="Liberation Sans, sans-serif" fontSize="12" fill="#3322ff" textAnchor="middle">
        <text x="63" y="376">X</text><text x="191" y="339">Z</text><text x="214" y="500">Y</text>
      </g>
    </svg>
  );
}
function Triad() {
  return (
    <svg viewBox="330 1370 120 125" width="120" height="125" fill="none" className="absolute bottom-[22px] left-[17px]" aria-hidden="true">
      <path d="M395 1383L437 1379L442 1386L445 1427L402 1431L399 1425ZM437 1379L441 1421L399 1425M441 1421L445 1427" stroke="#999" fill="#fff" />
      <path d="M397 1406L367 1408V1405L347 1412.500L367 1416V1413L397 1410Z" fill="#d93030" stroke="#8e1c1c" strokeWidth=".6" />
      <path d="M420 1426H424L427 1458H430L426 1477L420 1458H423Z" fill="#3aa83a" stroke="#1f701f" strokeWidth=".6" />
      <path d="M410 1395L415 1391L420 1396L421 1403L418 1404L415 1401L411 1399Z" fill="#0a2fc0" />
      <g fontFamily="Liberation Sans, sans-serif" fontSize="11" textAnchor="middle">
        <text x="338" y="1417" fill="#e03030">X</text><text x="427" y="1491" fill="#2f9e2f">Y</text><text x="413" y="1394" fill="#2244ff" fontSize="9">Z</text>
      </g>
    </svg>
  );
}

function Canvas() {
  return (
    <main className="flex min-w-0 flex-1 flex-col border-l border-[#a8a8a8] bg-white">
      <div className="flex h-[30px] shrink-0 items-stretch border-b-2 border-[#005f87] text-[15px]">
        <button className="flex w-[107px] items-center gap-1 pl-[5px]">
          <S v={24} w={17}><g stroke="#333" strokeWidth="1.500"><path d="M3 9V3L8 1L14 4V12M14 4L22 2V20L15 22M1 12L5 9" /><circle cx="8" cy="17" r="6" /><path d="M8 12L11 15L7 22" /></g></S>
          发现中心
        </button>
        <button className="flex items-center gap-1 bg-[#005f87] pl-[6px] pr-[7px] text-white"><S v={24} w={16}>{part}</S>锁盖.prt
          <S v={8} w={9} className="ml-[3px]"><path d="M1 1L7 7M7 1L1 7" stroke="#fff" strokeWidth="1.900" /></S>
        </button>
      </div>
      <div className="relative min-h-0 flex-1 overflow-hidden"><Model /><Triad /></div>
    </main>
  );
}

const wrench = <path d="M16 29L24 21C22 16 26 13 29 14L27 17L30 20L32 18C33 23 29 25 26 24L18 32Z" fill="#fff" stroke="#222" strokeWidth="1.500" />;
const tools = [
  ["草图工具", <g><path d="M2 26H18M5 3V28M1 10C8 3 18 1 29 2" stroke="#1ba6cc" strokeWidth="1.800" /><circle cx="16" cy="15" r="7" stroke="#1ba6cc" strokeWidth="1.800" />{wrench}</g>],
  ["拉伸", shapes.extrude],
  ["特征工具", <g><Boss k={0.85} />{wrench}</g>],
  ["基准平面", shapes.plane],
  ["测量", <g><path d="M1 26L26 1L31 6L6 31Z" fill="#f2f2f2" stroke="#333" strokeWidth="1.600" /><path d="M6 22L9 25M10 18L12 20M14 14L17 17M18 10L20 12M22 6L25 9" stroke="#333" strokeWidth="1.400" /></g>],
  ["适合窗口", <g stroke="#333" strokeWidth="1.600"><rect x="1" y="1" width="30" height="30" fill="#fff" /><path d="M1 6H31M20 3.500H28M5 16V9H12M5 9L12 16M27 16V9H20M27 9L20 16M5 21V28H12M5 28L12 21M27 21V28H20M27 28L20 21" /></g>],
  ["边倒圆", shapes.blend],
  ["旋转", shapes.revolve],
  ["阵列特征", shapes.pattern],
  ["收藏", <g><path d="M21 9L24 16L32 17L26 22L28 30L21 26L14 30L16 22L10 17L18 16Z" fill="#ffe35a" stroke="#c79a12" /><path d="M1 18H9M1 23H13M1 28H12" stroke="#3b8ade" strokeWidth="1.600" /><path d="M7 5L20 2V9L12 10Z" fill="#f3c98c" stroke="#8b5a1c" /><path d="M20 1H28V9H20Z" fill="#3b62c8" /></g>],
];
function RightBar() {
  return (
    <div className="flex w-[32px] shrink-0 flex-col items-center border-l border-[#d0d0d0] bg-white pl-px pt-2">
      {tools.map(([l, g]) => <button key={l} aria-label={l} className="flex h-8 shrink-0 items-center justify-center"><S v={32} w={24} className="overflow-visible">{g}</S></button>)}
      <span className="mt-[6px] h-px w-[27px] bg-[#d0d0d0]" />
      <button aria-label="收起" className="mb-[6px] mr-2 mt-auto"><S v={8} w={8}><path d="M6 0V8L1 4Z" fill="#111" /></S></button>
    </div>
  );
}

/* ---------- taskbar ---------- */
const apps = [
  ["任务视图", <g><rect x="1" y="8" width="22" height="22" rx="2" fill="#2b2b2b" /><rect x="9" y="2" width="22" height="21" rx="2" fill="#fff" fillOpacity=".9" /><path d="M9 8H23V23H11Q9 23 9 21Z" fill="#b4b4b4" /></g>],
  ["文件资源管理器", <g><path d="M1 5C1 3 3 3 4 3H10L13 6V12H1Z" fill="#d99a00" /><rect x="1" y="6" width="30" height="24" rx="2" fill="#ffcf48" /><path d="M5 30V25Q5 22 8 22H24Q27 22 27 25V30Z" fill="#1877c9" /><path d="M10 26H22" stroke="#0d4f8f" strokeWidth="1.500" /></g>],
  ["Edge", <g><defs><linearGradient id="ed" x2="1" y2=".5"><stop stopColor="#1b9de2" /><stop offset="1" stopColor="#5fd66a" /></linearGradient></defs><circle cx="16" cy="16" r="15" fill="#0f5fb4" /><path d="M1 16C1 6 9 1 17 1C26 1 31 8 31 13C31 19 26 21 22 21C18 21 19 18 20 16C20 11 15 9 11 10C6 11 2 14 1 16Z" fill="url(#ed)" /><path d="M12 12C7 17 10 28 19 30C23 30 27 27 29 24C24 26 15 25 14 18Z" fill="#2a8fe0" /><path d="M15 13C12 17 15 24 24 24C27 24 29 22 30 21C26 23 19 22 18 19C19 18 20 17 20 15C19 13 17 12 15 13Z" fill="#e8f3fb" /></g>, 1],
  ["Microsoft Store", <g><path d="M10 8V4C10 2 22 2 22 4V8" stroke="#28a3e0" strokeWidth="2.400" /><rect x="2" y="7" width="28" height="24" rx="3" fill="#16446e" /><path d="M10 13H15.500V18.500H10Z" fill="#f25022" /><path d="M16.500 13H22V18.500H16.500Z" fill="#7fba00" /><path d="M10 19.500H15.500V25H10Z" fill="#00a4ef" /><path d="M16.500 19.500H22V25H16.500Z" fill="#ffb900" /></g>],
  ["红色应用", <g><path d="M16 1L31 16L16 31L1 16Z" fill="#f0144c" /><path d="M16 1L31 16L16 31Z" fill="#ff6a1a" /><path d="M16 1L22 16L16 31L10 16Z" fill="#f80010" /></g>],
  ["帮助", <g><circle cx="16" cy="16" r="14.500" fill="#0f95d4" stroke="#fff" strokeWidth="2" /><path d="M10.500 12C10 5 22 5 21.500 12C21 16 16 16 16 20M16 22.500V26" stroke="#fff" strokeWidth="3.600" /></g>],
  ["Outlook", <g><path d="M2 12L16 2L31 14V29L24 31H10Z" fill="#2f74e0" /><path d="M5 9L16 2H20L31 14L25 18Z" fill="#173f9c" /><path d="M9 8L15 5L26 15L20 18Z" fill="#4f8ff0" /><path d="M14 24L31 14V27Q31 31 27 31H10Z" fill="#4da8ff" /><rect x="1" y="17" width="13" height="13" rx="2" fill="#1454c4" /><circle cx="7.500" cy="23.500" r="3.300" stroke="#fff" strokeWidth="1.800" /></g>],
  ["应用商店", <g><rect x="1" y="1" width="30" height="30" rx="3" fill="#22aaff" /><path d="M1 16H31V28Q31 31 28 31H4Q1 31 1 28Z" fill="#0b6cf5" /><path d="M1 16H31V22H1Z" fill="#1290fa" /><path d="M10 10C12 16 20 16 22 10" stroke="#fff" strokeWidth="2" /></g>],
  ["设置", <g><path d="M13 1H19L20 5L24 7L28 5L31 10L28 14V18L31 22L28 27L24 25L20 27L19 31H13L12 27L8 25L4 27L1 22L4 18V14L1 10L4 5L8 7L12 5Z" fill="#68737d" /><circle cx="16" cy="16" r="7" fill="#1e5fa8" stroke="#dfe6ec" strokeWidth="2" /></g>],
  ["WPS", <path d="M1 6H10L13 12L14 7H30L22 27H17L15 20L12 27H8ZM9 10L11 18L16 11L19 20L23 10Z" fill="#f2381f" fillRule="evenodd" />],
  ["微信", <g><rect x="1" y="1" width="30" height="30" rx="7" fill="#0ccf66" /><ellipse cx="13" cy="13" rx="7.500" ry="6" fill="#fff" /><ellipse cx="20" cy="20" rx="6.500" ry="5" fill="#fff" stroke="#0ccf66" /><g fill="#0a9c4d"><circle cx="10.500" cy="11.500" r="1" /><circle cx="15.500" cy="11.500" r="1" /><circle cx="18" cy="19" r=".8" /><circle cx="22" cy="19" r=".8" /></g></g>, 1],
];
function Taskbar() {
  return (
    <footer className="relative grid h-14 shrink-0 grid-cols-[1fr_auto_1fr] items-center bg-linear-to-r from-[#e1edf7] via-[#d5def4] to-[#e2eef7] pt-[2px]">
      <span />
      <div className="flex items-center">
        <button aria-label="开始" className="flex w-[55px] justify-center">
          <S v={30} w={30}><path d="M0 0H14V14H0ZM16 0H30V14H16Z" fill="#35b1f2" /><path d="M0 16H14V30H0ZM16 16H30V30H16Z" fill="#0878d0" /></S>
        </button>
        <label className="ml-1 mr-1 flex h-10 w-[273px] items-center gap-3 rounded-full border border-[#c4cedd] bg-[#f3f7fd] px-[13px]">
          <S v={20} w={20}><circle cx="9" cy="8" r="6.500" stroke="#222" strokeWidth="2" /><path d="M13 13L19 19" stroke="#222" strokeWidth="2" /></S>
          <input aria-label="搜索" placeholder="搜索" className="min-w-0 flex-1 bg-transparent text-lg outline-none placeholder:text-[#555]" />
        </label>
        {apps.map(([l, g, dot]) => (
          <button key={l} aria-label={l} className="relative flex h-[50px] w-[55px] items-center justify-center">
            <S v={32} w={30}>{g}</S>
            {dot && <span className="absolute bottom-0 h-1 w-2 rounded bg-[#7a828c]" />}
          </button>
        ))}
        <button aria-label="NX" className="relative ml-[3px] flex h-[50px] w-[48px] items-center justify-center rounded-md border border-[#dbe2ee] bg-[#edf1fa]">
          <span className="flex h-[30px] w-[30px] items-start justify-end bg-[#0f9090]">
            <span className="flex h-[27px] w-[27px] items-center justify-center bg-[#8a150c] text-xs font-bold text-white">NX</span>
          </span>
          <span className="absolute bottom-0 h-1 w-5 rounded bg-[#0878d0]" />
        </button>
      </div>
      <div className="flex items-center justify-self-end pr-[22px] text-[#222]">
        <button aria-label="隐藏的图标" className="mr-6"><S v={14} w={14}><path d="M1 10L7 4L13 10" stroke="#222" strokeWidth="1.800" /></S></button>
        <button className="mr-[22px] text-lg leading-6">中</button>
        <S v={20} w={20}><path d="M1 8C6 3 14 3 19 8M4 11C7 8 13 8 16 11M7 14C9 12.500 11 12.500 13 14" stroke="#222" strokeWidth="1.500" /><circle cx="10" cy="16.500" r="1.500" fill="#222" /></S>
        <S v={20} w={20} className="ml-[9px]"><path d="M1 7H4L9 3V17L4 13H1Z" stroke="#222" strokeWidth="1.400" /><path d="M12 7C13.500 9 13.500 11 12 13" stroke="#222" strokeWidth="1.300" /><path d="M14 5C17 8 17 12 14 15M17 3C21 7 21 13 17 17" stroke="#aab" /></S>
        <svg viewBox="0 0 26 16" width="26" height="16" fill="none" className="ml-[11px] mr-1" aria-hidden="true"><rect x="1" y="3" width="22" height="12" rx="3" stroke="#222" strokeWidth="1.500" /><rect x="3" y="5" width="18" height="8" rx="1" fill="#118a1c" /><path d="M25 7V11" stroke="#222" strokeWidth="1.600" /><path d="M13 0L9 7H12L11 11L16 5H13Z" fill="#111" stroke="#fff" strokeWidth=".6" /></svg>
        <span className="w-[46px] text-sm">100%</span>
        <span className="w-[78px] text-right text-sm leading-5">14:56<br />2026/7/24</span>
      </div>
      <p className="absolute bottom-[3px] right-[5px] flex items-baseline whitespace-pre font-['Liberation_Mono','Noto_Sans_CJK_SC',monospace] text-[13px] leading-5 text-[#f4f4f4] [text-shadow:1px_1px_0_#555]">UG<span className="text-base leading-5">爱好者论坛</span> WWW.UGSNX.COM</p>
    </footer>
  );
}

export default function App() {
  return (
    <div className="flex h-screen flex-col overflow-hidden bg-white font-['Noto_Sans','Noto_Sans_CJK_SC',sans-serif] text-[#1f1f1f]">
      <Header />
      <Ribbon />
      <SelectionBar />
      <div className="flex min-h-0 flex-1">
        <ResourceBar />
        <Navigator />
        <Canvas />
        <RightBar />
      </div>
      <div className="grid h-6 shrink-0 grid-cols-[1fr_auto_1fr] items-center border-t border-b border-[#a8a8a8] bg-white text-sm font-semibold leading-5">
        <span className="pl-[3px]">选择对象并使用 MB3，或者双击某一对象</span>
        <span className="pl-[50px]">部件文件已保存</span>
        <span />
      </div>
      <Taskbar />
    </div>
  );
}
